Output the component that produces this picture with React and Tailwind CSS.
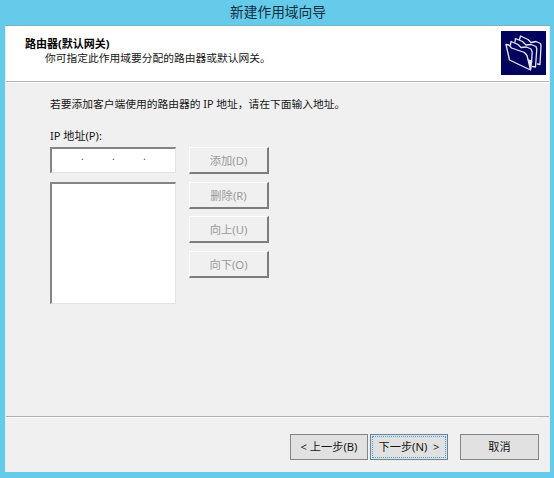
import clsx from "clsx";

const listActions = [
  { label: "添加(D)", space: "mb-[8px]" },
  { label: "删除(R)", space: "mb-[7px]" },
  { label: "向上(U)", space: "mb-[8px]" },
  { label: "向下(O)", space: "" },
];

function FoldersIcon() {
  return (
    <svg width="45" height="44" viewBox="0 0 45 44" className="bg-[#02025c]">
      <g
        fill="#02025c"
        stroke="#e8e8f6"
        strokeWidth="1.3"
        strokeLinejoin="round"
        strokeLinecap="round"
      >
        <path d="M18.5 8.5 L19.5 5 L27 8.5 L30 11.5 L35 10.5 L39.5 12.5 L40 15 L39 33.5 L36.5 33" />
        <path d="M14 11 L14.5 7.5 L21.5 10.5 L25 14 L30 13.5 L35 15.5 L35.8 18 L34.5 36 L31.5 35.5" />
        <path d="M9.5 14 L10 10.5 L17 13.5 L20 16.5 L25.5 16 L30 18 L31.2 21 L30.5 32" />
        <path d="M5 13.5 L8 14 L10.5 17 L23.5 21.5 L26 24.5 L29.5 39 L8.5 29 Z" />
        <path d="M28 29 L30.5 30 L29.8 38 Z" fill="#e8e8f6" />
      </g>
    </svg>
  );
}

// Disabled 3D button used beside the address list
function ListButton({ label, space }) {
  return (
    <button
      disabled
      className={clsx(
        "flex h-[27px] w-[80px] items-center justify-center border-t border-l border-r-2 border-b-2 border-t-white border-l-white border-r-[#7d7d7d] border-b-[#7d7d7d] bg-[#f0f0f0] text-[11.3px] text-[#9a9a9a]",
        space
      )}
    >
      {label}
    </button>
  );
}

function App() {
  return (
    <div className="flex h-[478px] w-[554px] flex-col overflow-hidden bg-[#66caea] pr-[4px] pl-[5px] font-['Noto_Sans','Noto_Sans_CJK_SC',sans-serif] text-[10.75px] leading-[15px] whitespace-nowrap text-[#161616]">
      <div className="flex h-[26px] items-center justify-center border-b border-[#79afc2] pb-px pl-px text-[13.7px] leading-[18px] text-[#123040]">
        新建作用域向导
      </div>

      <div className="flex h-[446px] flex-col border-x border-[#dff1f7] bg-[#f0f0f0]">
        {/* Header */}
        <div className="flex h-[56px] justify-between border-b border-[#b4b4b4] bg-white pt-[5px] pr-[3px] pl-[19px]">
          <div className="pt-[5px]">
            <div className="text-[11px] font-bold text-black">
              路由器(默认网关)
            </div>
            <div className="pl-[20px]">
              你可指定此作用域要分配的路由器或默认网关。
            </div>
          </div>
          <FoldersIcon />
        </div>

        {/* Body */}
        <div className="flex-1 border-t border-white pl-[44px]">
          <div className="pt-[14px] text-[10.75px]">
            若要添加客户端使用的路由器的 IP 地址，请在下面输入地址。
          </div>
          <div className="mt-[16px] text-[11.1px]">IP 地址(P):</div>
          <div className="mt-[4px] flex gap-[13px]">
            <div>
              <div className="flex h-[26px] w-[126px] gap-[29px] border-t-2 border-r border-b border-l-2 border-t-[#858585] border-r-[#e3e3e3] border-b-[#e3e3e3] border-l-[#858585] bg-white pl-[29px] text-[#555]">
                <span className="w-[2px]">.</span>
                <span className="w-[2px]">.</span>
                <span className="w-[2px]">.</span>
              </div>
              <div className="mt-[9px] h-[122px] w-[126px] border-t-2 border-r border-b border-l-2 border-t-[#858585] border-r-[#e3e3e3] border-b-[#e3e3e3] border-l-[#858585] bg-white" />
            </div>
            <div>
              {listActions.map((a) => (
                <ListButton key={a.label} label={a.label} space={a.space} />
              ))}
            </div>
          </div>
        </div>

        {/* Footer */}
        <div className="flex h-[56px] border-t border-[#b0b0b0] pr-[10px]">
          <div className="flex flex-1 items-start justify-end border-t border-white pt-[16px] text-[11.2px]">
            <button className="h-[26px] w-[78px] border border-[#858585] bg-[#e1e1e1] pb-[2px]">
              &lt; 上一步(B)
            </button>
            <button className="ml-[2px] h-[26px] w-[78px] border border-[#5c87a3] bg-[#e1e1e1] p-px">
              <span className="flex h-full items-center justify-center border border-dotted border-[#5f93b8] pb-px">
                下一步(N)&nbsp; &gt;
              </span>
            </button>
            <button className="ml-[12px] h-[26px] w-[79px] border border-[#858585] bg-[#e1e1e1] pb-[2px]">
              取消
            </button>
          </div>
        </div>
      </div>
    </div>
  );
}

export default App;
